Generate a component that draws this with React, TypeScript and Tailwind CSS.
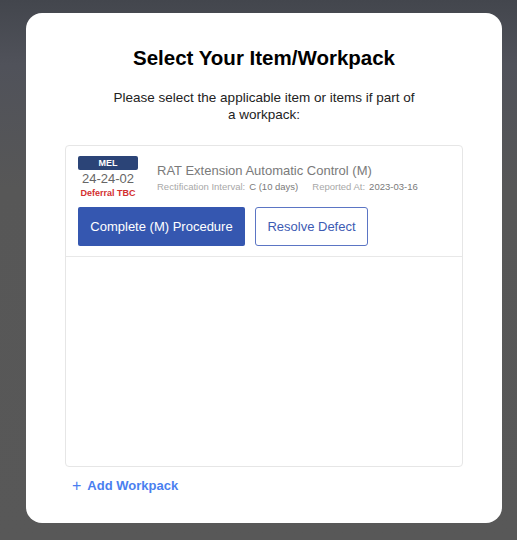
import React from "react";

export default function App() {
  return (
    <div
      className="w-[517px] h-[540px] flex bg-[linear-gradient(180deg,#43464d_0%,#50525a_12%,#575757_35%,#585858_100%)] pl-[26px] pr-[15px] pt-[13px] pb-[17px]"
      style={{ fontFamily: "'Liberation Sans', Arial, sans-serif" }}
    >
      <div className="flex-1 bg-white rounded-[16px] flex flex-col items-center pt-[33px]">
        <h1 className="text-[20.5px] leading-[24px] font-bold text-black whitespace-nowrap">
          Select Your Item/Workpack
        </h1>
        <p className="mt-[19px] w-[320px] text-center text-[13.5px] leading-[17px] text-[#222]">
          Please select the applicable item or items if part of
          <br />a workpack:
        </p>
        <div className="mt-[22px] self-stretch mx-[39px] h-[322px] border border-[#e6e6e6] rounded-[4px] flex flex-col">
          <div className="px-[12px] pt-[10px] pb-[10px] border-b border-[#e8e8e8]">
            <div className="flex items-start">
              <div className="w-[60px] flex flex-col items-center">
                <div className="w-[60px] h-[14px] rounded-[2px] bg-[#2b4477] text-white text-[9px] leading-[14px] font-bold text-center">
                  MEL
                </div>
                <div className="text-[13px] leading-[16px] text-[#666] mt-[1px] whitespace-nowrap">24-24-02</div>
                <div className="text-[9px] leading-[12px] font-bold text-[#d32f2f] whitespace-nowrap">Deferral TBC</div>
              </div>
              <div className="ml-[19px] pt-[6px]">
                <div className="text-[13px] leading-[17px] text-[#7a7a7a] whitespace-nowrap">RAT Extension Automatic Control (M)</div>
                <div className="mt-[2px] flex text-[9.5px] leading-[12px] whitespace-nowrap">
                  <span className="text-[#a8a8a8]">Rectification Interval:</span>
                  <span className="ml-[4px] text-[#7a7a7a]">C (10 days)</span>
                  <span className="ml-[14px] text-[#a8a8a8]">Reported At:</span>
                  <span className="ml-[4px] text-[#7a7a7a]">2023-03-16</span>
                </div>
              </div>
            </div>
            <div className="mt-[8px] flex gap-[10px]">
              <button className="h-[39px] w-[167px] rounded-[2px] bg-[#3557b0] text-white text-[13px] whitespace-nowrap">
                Complete (M) Procedure
              </button>
              <button className="h-[39px] w-[113px] rounded-[3px] border border-[#5b75c4] bg-white text-[#3d5bb3] text-[13px] whitespace-nowrap">
                Resolve Defect
              </button>
            </div>
          </div>
        </div>
        <div className="self-start ml-[46px] mt-[9px] flex items-center text-[#4a7ff0] text-[13px] font-bold">
          <span className="text-[16px] leading-[16px] mr-[6px] font-normal">+</span>
          Add Workpack
        </div>
      </div>
    </div>
  );
}
